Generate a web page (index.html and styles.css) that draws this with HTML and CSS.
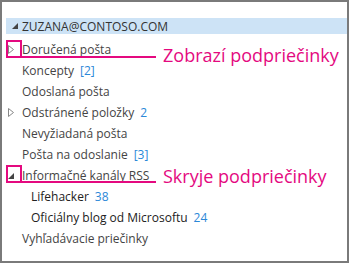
FILE: index.html
```html
<!DOCTYPE html>
<html lang="sk">
<head>
  <meta charset="UTF-8">
  <title>Priečinky</title>
  <link rel="stylesheet" href="styles.css">
</head>
<body>
<div class="frame">
  <div class="account">
    <svg class="tri" width="6" height="6" viewBox="0 0 6 6"><polygon points="6,0 6,6 0,6" fill="#444"/></svg>
    <span>ZUZANA@CONTOSO.COM</span>
  </div>

  <ul class="folders">
    <li class="folder">
      <svg class="tri" width="6" height="9" viewBox="0 0 6 9"><polygon points="0.5,0.5 5.5,4.5 0.5,8.5" fill="none" stroke="#888"/></svg>
      <span>Doručená pošta</span>
    </li>
    <li class="folder"><span>Koncepty</span> <span class="count">[2]</span></li>
    <li class="folder"><span>Odoslaná pošta</span></li>
    <li class="folder">
      <svg class="tri" width="6" height="9" viewBox="0 0 6 9"><polygon points="0.5,0.5 5.5,4.5 0.5,8.5" fill="none" stroke="#888"/></svg>
      <span>Odstránené položky</span> <span class="count">2</span>
    </li>
    <li class="folder"><span>Nevyžiadaná pošta</span></li>
    <li class="folder"><span>Pošta na odoslanie</span> <span class="count">[3]</span></li>
    <li class="folder">
      <svg class="tri" width="6" height="6" viewBox="0 0 6 6"><polygon points="6,0 6,6 0,6" fill="#444"/></svg>
      <span>Informačné kanály RSS</span>
    </li>
    <li class="folder sub"><span>Lifehacker</span> <span class="count">38</span></li>
    <li class="folder sub"><span>Oficiálny blog od Microsoftu</span> <span class="count">24</span></li>
    <li class="folder"><span>Vyhľadávacie priečinky</span></li>
  </ul>

  <!-- callouts -->
  <div class="mark mark-show"></div>
  <div class="line line-show"></div>
  <div class="callout callout-show">Zobrazí podpriečinky</div>

  <div class="mark mark-hide"></div>
  <div class="line line-hide"></div>
  <div class="callout callout-hide">Skryje podpriečinky</div>
</div>
</body>
</html>
```

FILE: styles.css
```css
html, body {
  margin: 0;
  padding: 0;
}
body {
  font-family: 'Segoe UI', 'Open Sans', sans-serif;
  font-size: 12px;
  color: #444;
  background: white;
}
.frame {
  position: relative;
  width: 349px;
  height: 263px;
  box-sizing: border-box;
  border: 2px solid #7a7a7a;
  background: white;
  padding-top: 16px;
  overflow: hidden;
}
.account {
  display: flex;
  align-items: center;
  height: 16px;
  margin-left: 4px;
  padding-left: 6px;
  background: #cde3f6;
  color: #333;
  font-size: 12px;
}
.account .tri {
  margin-right: 4px;
}
.folders {
  list-style: none;
  margin: 5px 0 0 0;
  padding: 0;
}
.folder {
  display: flex;
  align-items: center;
  height: 21px;
  padding-left: 20px;
  white-space: nowrap;
}
.folder .tri {
  margin-left: -14px;
  margin-right: 8px;
}
.folder.sub {
  padding-left: 29px;
  color: #222;
}
.count {
  color: #2b88d8;
  margin-left: 6px;
}
.mark {
  position: absolute;
  left: 4px;
  width: 12px;
  height: 14px;
  border: 2px solid #e4097f;
}
.mark-show { top: 38px; }
.mark-hide { top: 163px; }
.line {
  position: absolute;
  left: 4px;
  width: 150px;
  height: 2px;
  background: #e4097f;
}
.line-show { top: 54px; }
.line-hide { top: 179px; }
.callout {
  position: absolute;
  left: 161px;
  color: #e4097f;
  font-size: 18px;
  line-height: 22px;
}
.callout-show { top: 42px; }
.callout-hide { top: 163px; }
```
